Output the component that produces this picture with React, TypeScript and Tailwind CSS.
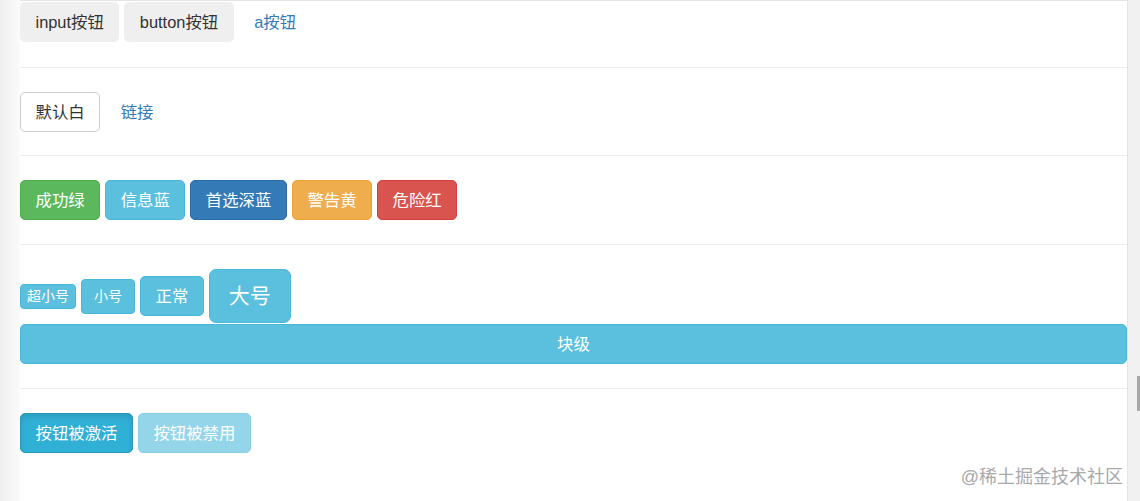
const base =
  "inline-flex items-center justify-center whitespace-nowrap border rounded-[5px] px-[14.5px] py-[7px] text-[16.4px] leading-[24px]";

const font = { fontFamily: '"Liberation Sans", "Noto Sans CJK SC", sans-serif' };

function Divider() {
  return <div className="h-px bg-[#eeeeee]" />;
}

export default function App() {
  return (
    <div
      className="flex h-[501px] w-full overflow-hidden bg-white text-[#333333]"
      style={font}
    >
      {/* left gutter */}
      <div className="w-[20px] shrink-0 bg-linear-to-r from-[#efefef] to-[#fbfbfb]" />

      {/* page body */}
      <div className="relative flex-1 border-t border-r border-[#e4e4e4] bg-white">
        {/* element types */}
        <div className="mt-px mb-[25px] flex items-center gap-[5px]">
          <button className={`${base} border-transparent bg-[#efefef] text-[#333333]`}>input按钮</button>
          <button className={`${base} border-transparent bg-[#efefef] text-[#333333]`}>button按钮</button>
          <a className={`${base} border-transparent text-[#337ab7]`}>a按钮</a>
        </div>
        <Divider />

        {/* default + link */}
        <div className="mt-[24px] mb-[23px] flex items-center gap-[5px]">
          <button className={`${base} border-[#cccccc] bg-white text-[#333333]`}>默认白</button>
          <a className={`${base} border-transparent text-[#337ab7]`}>链接</a>
        </div>
        <Divider />

        {/* contextual colours */}
        <div className="mt-[24px] mb-[24px] flex items-center gap-[5px] text-white">
          <button className={`${base} border-[#4cae4c] bg-[#5cb85c]`}>成功绿</button>
          <button className={`${base} border-[#46b8da] bg-[#5bc0de]`}>信息蓝</button>
          <button className={`${base} border-[#2e6da4] bg-[#337ab7]`}>首选深蓝</button>
          <button className={`${base} border-[#eea236] bg-[#f0ad4e]`}>警告黄</button>
          <button className={`${base} border-[#d43f3a] bg-[#d9534f]`}>危险红</button>
        </div>
        <Divider />

        {/* sizes */}
        <div className="mt-[24px] mb-[24px] text-white">
          <div className="mb-px flex items-center gap-[5px]">
            <button className="inline-flex items-center rounded-[4px] border border-[#46b8da] bg-[#5bc0de] px-[6px] py-px text-[14px] leading-[21px]">
              超小号
            </button>
            <button className="inline-flex items-center rounded-[4px] border border-[#46b8da] bg-[#5bc0de] px-[12px] py-[6px] text-[14px] leading-[21px]">
              小号
            </button>
            <button className={`${base} border-[#46b8da] bg-[#5bc0de]`}>正常</button>
            <button className="inline-flex items-center rounded-[7px] border border-[#46b8da] bg-[#5bc0de] px-[19px] py-[12px] text-[21px] leading-[28px]">
              大号
            </button>
          </div>
          <button className={`${base} w-full border-[#46b8da] bg-[#5bc0de]`}>块级</button>
        </div>
        <Divider />

        {/* states */}
        <div className="mt-[24px] flex items-center gap-[5px] text-white">
          <button className={`${base} border-[#269abc] bg-[#31b0d5] shadow-[inset_0_3px_5px_rgba(0,0,0,0.125)]`}>
            按钮被激活
          </button>
          <button className={`${base} border-[#46b8da] bg-[#5bc0de] opacity-65`} disabled>
            按钮被禁用
          </button>
        </div>

        {/* watermark */}
        <div className="absolute right-[4px] top-[465px] text-[18px] leading-[22px] text-[#a9a9a9]">
          @稀土掘金技术社区
        </div>
      </div>

      {/* scrollbar */}
      <div className="flex w-[12px] shrink-0 flex-col bg-[#f1f1f1]">
        <div className="mt-[376px] ml-[9px] h-[35px] w-[3px] bg-[#a8a8a8]" />
      </div>
    </div>
  );
}
